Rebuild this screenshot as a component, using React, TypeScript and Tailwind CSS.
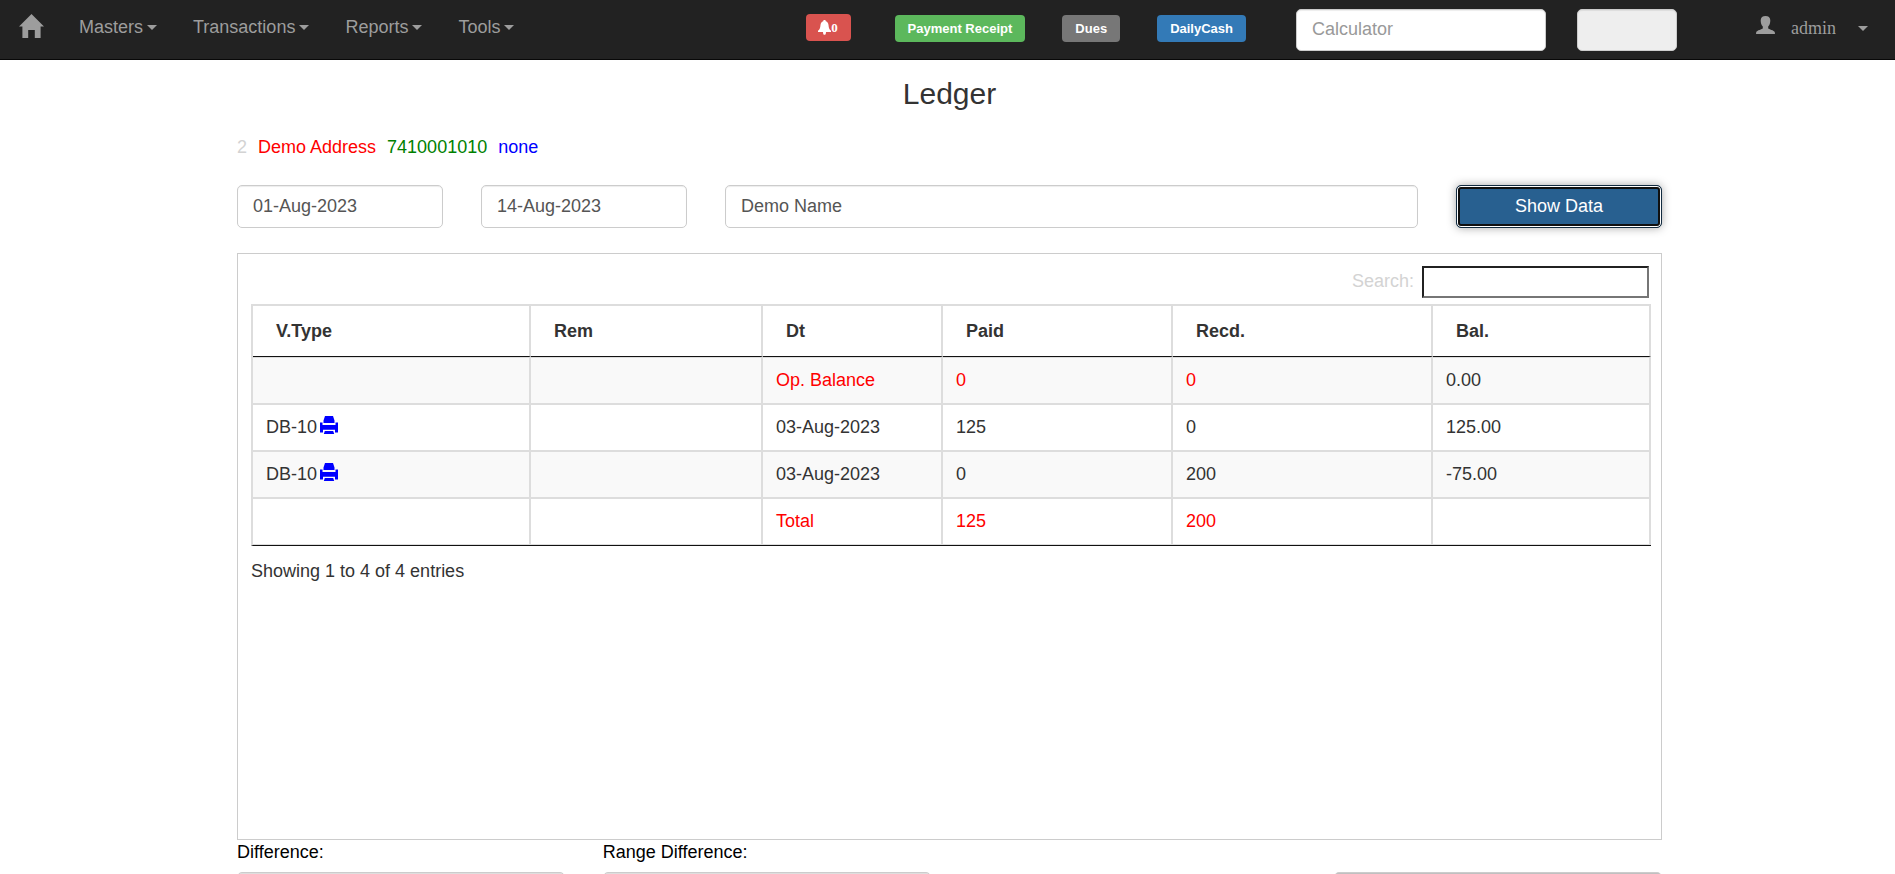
import type { ReactNode } from "react";

function Caret() {
  return (
    <svg viewBox="0 0 10 5" className="h-[5px] w-[10px] fill-current" aria-hidden="true">
      <path d="M0 0H10L5 5Z" />
    </svg>
  );
}

function HomeIcon() {
  return (
    <svg viewBox="0 0 25 24" className="h-6 w-[25px] fill-current" aria-hidden="true">
      <path d="M12.5 0 25 12.6H21.6V24H15.8V16H9.2V24H3.4V12.6H0Z" />
    </svg>
  );
}

function UserIcon() {
  return (
    <svg viewBox="0 0 19 18" className="h-[18px] w-[19px] fill-current" aria-hidden="true">
      <path d="M9.5 0C12.4 0 14.3 1.5 14.3 4.2C14.3 6.6 13.8 9 12.2 10.6V12.2C12.6 13.2 18.2 14.2 18.8 16.2L19 18H0L.2 16.2C.8 14.2 6.4 13.2 6.8 12.2V10.6C5.2 9 4.7 6.6 4.7 4.2C4.7 1.5 6.6 0 9.5 0Z" />
    </svg>
  );
}

function BellIcon() {
  return (
    <svg viewBox="0 0 13 15" className="h-[15px] w-[13px] fill-current" aria-hidden="true">
      <path d="M6.5 0C7.3 0 7.8 .5 7.8 1.3C9.6 1.9 10.3 3.3 10.5 5C10.8 8 11.2 9.6 13 10.8V12H0V10.8C1.8 9.6 2.2 8 2.5 5C2.7 3.3 3.4 1.9 5.2 1.3C5.2 .5 5.7 0 6.5 0ZM5 12H8C8 14 7.4 14.8 6.5 14.8C5.6 14.8 5 14 5 12Z" />
    </svg>
  );
}

function PrinterIcon() {
  return (
    <svg viewBox="0 0 18 18" className="h-[18px] w-[18px] fill-current" aria-hidden="true">
      <path d="M5 0H13L14.5 4.5V7H3.5V4.5ZM0 6.5H2.5V9H15.5V6.5H18V16.5H15V13.8H3V16.5H0ZM4.8 15H13.2L14.2 18H3.8Z" />
    </svg>
  );
}

const menus = ["Masters", "Transactions", "Reports", "Tools"];

type Row = { type: string; dt: string; paid: string; recd: string; bal: string; red?: boolean };

const rows: Row[] = [
  { type: "", dt: "Op. Balance", paid: "0", recd: "0", bal: "0.00", red: true },
  { type: "DB-10", dt: "03-Aug-2023", paid: "125", recd: "0", bal: "125.00" },
  { type: "DB-10", dt: "03-Aug-2023", paid: "0", recd: "200", bal: "-75.00" },
  { type: "", dt: "Total", paid: "125", recd: "200", bal: "", red: true },
];

const columns = [
  { name: "V.Type", width: "w-[278px]" },
  { name: "Rem", width: "w-[232px]" },
  { name: "Dt", width: "w-[180px]" },
  { name: "Paid", width: "w-[230px]" },
  { name: "Recd.", width: "w-[260px]" },
  { name: "Bal.", width: "w-[218px]" },
];

const field =
  "rounded-[5px] border border-[#ccc] px-[15px] text-lg leading-[25px] text-[#555] shadow-[inset_0_1px_1px_rgba(0,0,0,0.075)] placeholder:text-[#999]";

function Badge({ className, children }: { className: string; children: ReactNode }) {
  return (
    <a
      href="#"
      className={`flex h-[27px] items-center rounded px-[13px] text-[13px] font-bold leading-[18px] text-white ${className}`}
    >
      {children}
    </a>
  );
}

function Cell({ children, red, first, last }: { children?: ReactNode; red?: boolean; first?: boolean; last?: boolean }) {
  return (
    <td
      className={`border-r-2 border-[#ddd] px-[13px] py-[10px] ${first ? "border-t" : ""} ${last ? "border-b" : "border-b-2"} ${red ? "text-[#f00]" : ""}`}
    >
      {children}
    </td>
  );
}

export default function App() {
  return (
    <div className="bg-white font-['Liberation_Sans',Arial,sans-serif] text-lg leading-[25px] text-[#333]">
      <header className="flex h-[60px] items-start border-b border-[#080808] bg-[#222] text-[#9d9d9d]">
        <nav className="flex flex-1 items-start pl-[19px] pt-[14px]" aria-label="Main">
          <a href="#" aria-label="Home" className="mr-[35px]">
            <HomeIcon />
          </a>
          <div className="flex gap-9 pt-px">
            {menus.map((name) => (
              <button key={name} type="button" className="flex items-center gap-1">
                {name}
                <Caret />
              </button>
            ))}
          </div>
        </nav>
        <div className="flex pt-[9px]">
          <button
            type="button"
            aria-label="Notifications"
            className="mr-11 mt-[5px] flex h-[27px] w-[45px] items-center justify-center rounded bg-[#d9534f] text-white"
          >
            <BellIcon />
            <span className="font-['Liberation_Serif',serif] text-[13px] font-bold leading-none">0</span>
          </button>
          <div className="mt-[6px] flex">
            <Badge className="mr-[37px] bg-[#5cb85c]">Payment Receipt</Badge>
            <Badge className="mr-[37px] bg-[#777]">Dues</Badge>
            <Badge className="mr-[50px] bg-[#337ab7]">DailyCash</Badge>
          </div>
          <input aria-label="Calculator" placeholder="Calculator" className={`mr-[31px] h-[42px] w-[250px] bg-white pb-[2px] ${field}`} />
          <input aria-label="Result" readOnly className={`mr-[79px] h-[42px] w-[100px] bg-[#eee] ${field}`} />
        </div>
        <button
          type="button"
          className="mr-[27px] flex items-center pt-[16px] font-['Liberation_Serif',serif] leading-[25px]"
        >
          <span className="self-start">
            <UserIcon />
          </span>
          <span className="ml-4 mr-[22px]">admin</span>
          <Caret />
        </button>
      </header>

      <main className="pl-[237px] pr-[233px] pt-[17px]">
        <h1 className="text-center text-3xl leading-[33px]">Ledger</h1>
        <p className="mt-[25px] flex gap-[11px]">
          <span className="text-[#d3d3d3]">2</span>
          <span className="text-[#f00]">Demo Address</span>
          <span className="text-[#008000]">7410001010</span>
          <span className="text-[#00f]">none</span>
        </p>

        <form className="mt-[25px] flex gap-[38px]">
          <input aria-label="From date" defaultValue="01-Aug-2023" className={`h-[43px] w-[206px] ${field}`} />
          <input aria-label="To date" defaultValue="14-Aug-2023" className={`h-[43px] w-[206px] ${field}`} />
          <input aria-label="Name" defaultValue="Demo Name" className={`h-[43px] min-w-0 flex-1 ${field}`} />
          <button
            type="button"
            className="h-[43px] w-[206px] rounded-[5px] border border-[#122b40] bg-[#286090] text-white shadow-[inset_0_0_0_1px_#fff,inset_0_0_0_3px_#101010,0_0_10px_rgba(0,0,0,0.35)]"
          >
            Show Data
          </button>
        </form>

        <section className="mt-[25px] min-h-[587px] border border-[#ccc] pl-[13px] pr-[10px] pt-3">
          <div className="flex items-start justify-end gap-2 pr-[2px]">
            <label htmlFor="search" className="pt-[3px] text-[#d3d3d3]">
              Search:
            </label>
            <input
              id="search"
              type="search"
              className="h-8 w-[227px] border-2 border-b-[#767676] border-l-[#212121] border-r-[#767676] border-t-[#212121] px-1"
            />
          </div>
          <table className="mt-[6px] w-full table-fixed border-separate border-spacing-0 border-b border-l-2 border-t-2 border-b-[#111] border-l-[#ddd] border-t-[#ddd] text-left">
            <thead>
              <tr>
                {columns.map((c) => (
                  <th
                    key={c.name}
                    className={`h-[51px] border-b border-r-2 border-b-[#111] border-r-[#ddd] px-[23px] font-bold ${c.width}`}
                  >
                    {c.name}
                  </th>
                ))}
              </tr>
            </thead>
            <tbody>
              {rows.map((r, i) => {
                const edge = { first: i === 0, last: i === rows.length - 1 };
                return (
                  <tr key={i} className="odd:bg-[#f9f9f9]">
                    <Cell {...edge}>
                      {r.type && (
                        <span className="flex items-start gap-[3px]">
                          {r.type}
                          <a href="#" aria-label="Print" className="pt-px text-[#00f]">
                            <PrinterIcon />
                          </a>
                        </span>
                      )}
                    </Cell>
                    <Cell {...edge} />
                    <Cell {...edge} red={r.red}>{r.dt}</Cell>
                    <Cell {...edge} red={r.red}>{r.paid}</Cell>
                    <Cell {...edge} red={r.red}>{r.recd}</Cell>
                    <Cell {...edge}>{r.bal}</Cell>
                  </tr>
                );
              })}
            </tbody>
          </table>
          <p className="mt-[13px]">Showing 1 to 4 of 4 entries</p>
        </section>

        <div className="grid grid-cols-4 items-end gap-[38px] text-black">
          <label className="block">
            Difference:
            <input readOnly className={`mt-[7px] block h-[43px] w-full bg-[#eee] ${field}`} />
          </label>
          <label className="block">
            Range Difference:
            <input readOnly className={`mt-[7px] block h-[43px] w-full bg-[#eee] ${field}`} />
          </label>
          <button type="button" aria-label="Print ledger" className="col-start-4 h-[43px] rounded-[5px] border border-[#ccc] bg-[#c0c0c0]" />
        </div>
      </main>
    </div>
  );
}
